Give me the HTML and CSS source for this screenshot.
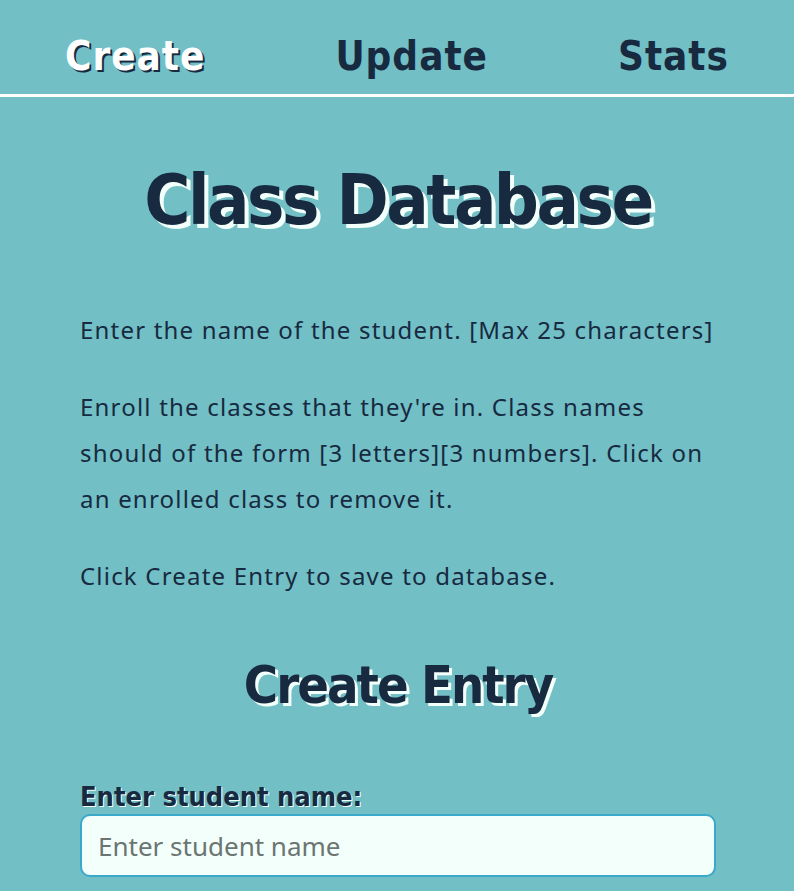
FILE: index.html
```html
<!DOCTYPE html>
<html lang="en">
<head>
<meta charset="utf-8">
<title>Class Database</title>
<link rel="stylesheet" href="styles.css">
</head>
<body>
<nav class="nav">
  <a class="nav-link active" href="#">Create</a>
  <a class="nav-link" href="#">Update</a>
  <a class="nav-link" href="#">Stats</a>
</nav>
<main class="main">
  <h1 class="title">Class Database</h1>
  <p class="info">Enter the name of the student. [Max 25 characters]</p>
  <p class="info">Enroll the classes that they're in. Class names should of the form [3 letters][3 numbers]. Click on an enrolled class to remove it.</p>
  <p class="info">Click Create Entry to save to database.</p>
  <h2 class="subtitle">Create Entry</h2>
  <form class="form">
    <label class="label" for="name">Enter student name:</label>
    <input class="input" id="name" type="text" placeholder="Enter student name">
  </form>
</main>
</body>
</html>
```
FILE: styles.css
```css
html, body {
  margin: 0;
  padding: 0;
  background: #72bfc6;
}
body {
  font-family: "Noto Sans", "DejaVu Sans", sans-serif;
  color: #172a3f;
}
.nav {
  display: flex;
  justify-content: space-around;
  align-items: flex-end;
  height: 97px;
  border-bottom: 3px solid #ffffff;
  box-sizing: border-box;
  padding-bottom: 18px;
}
.nav-link {
  font-family: "DejaVu Sans Condensed", "DejaVu Sans", sans-serif;
  font-weight: bold;
  font-size: 40px;
  line-height: 1;
  color: #172a3f;
  text-decoration: none;
  letter-spacing: 1px;
}
.nav-link.active {
  color: #ffffff;
  text-shadow: 2px 2px 0 #172a3f;
}
.main {
  padding: 0 78px 0 80px;
}
.title {
  font-family: "DejaVu Sans Condensed", "DejaVu Sans", sans-serif;
  font-weight: bold;
  font-size: 70px;
  line-height: 1;
  letter-spacing: -2.5px;
  text-align: center;
  margin: 68px 0 0;
  text-shadow: 4px 4px 0 #f2fffb;
}
.info {
  font-size: 24px;
  line-height: 46px;
  letter-spacing: 1.2px;
  margin: 0;
  padding-top: 31px;
}
.info:first-of-type {
  padding-top: 72px;
}
.subtitle {
  font-family: "DejaVu Sans Condensed", "DejaVu Sans", sans-serif;
  font-weight: bold;
  font-size: 52px;
  line-height: 1;
  letter-spacing: -2px;
  text-align: center;
  margin: 60px 0 0;
  text-shadow: 3px 3px 0 #f2fffb;
}
.form {
  display: flex;
  flex-direction: column;
  margin-top: 70px;
}
.label {
  font-family: "DejaVu Sans Condensed", "DejaVu Sans", sans-serif;
  font-weight: bold;
  font-size: 27px;
  line-height: 1.2;
  text-shadow: 1px 1px 0 #f2fffb;
}
.input {
  box-sizing: border-box;
  height: 63px;
  width: 100%;
  margin-top: 1px;
  border: 2px solid #3aa9c9;
  border-radius: 10px;
  background: #f2fffa;
  font-family: "Noto Sans", sans-serif;
  font-size: 26px;
  padding: 0 16px;
  color: #172a3f;
}
.input::placeholder {
  color: #6c7571;
}
```
